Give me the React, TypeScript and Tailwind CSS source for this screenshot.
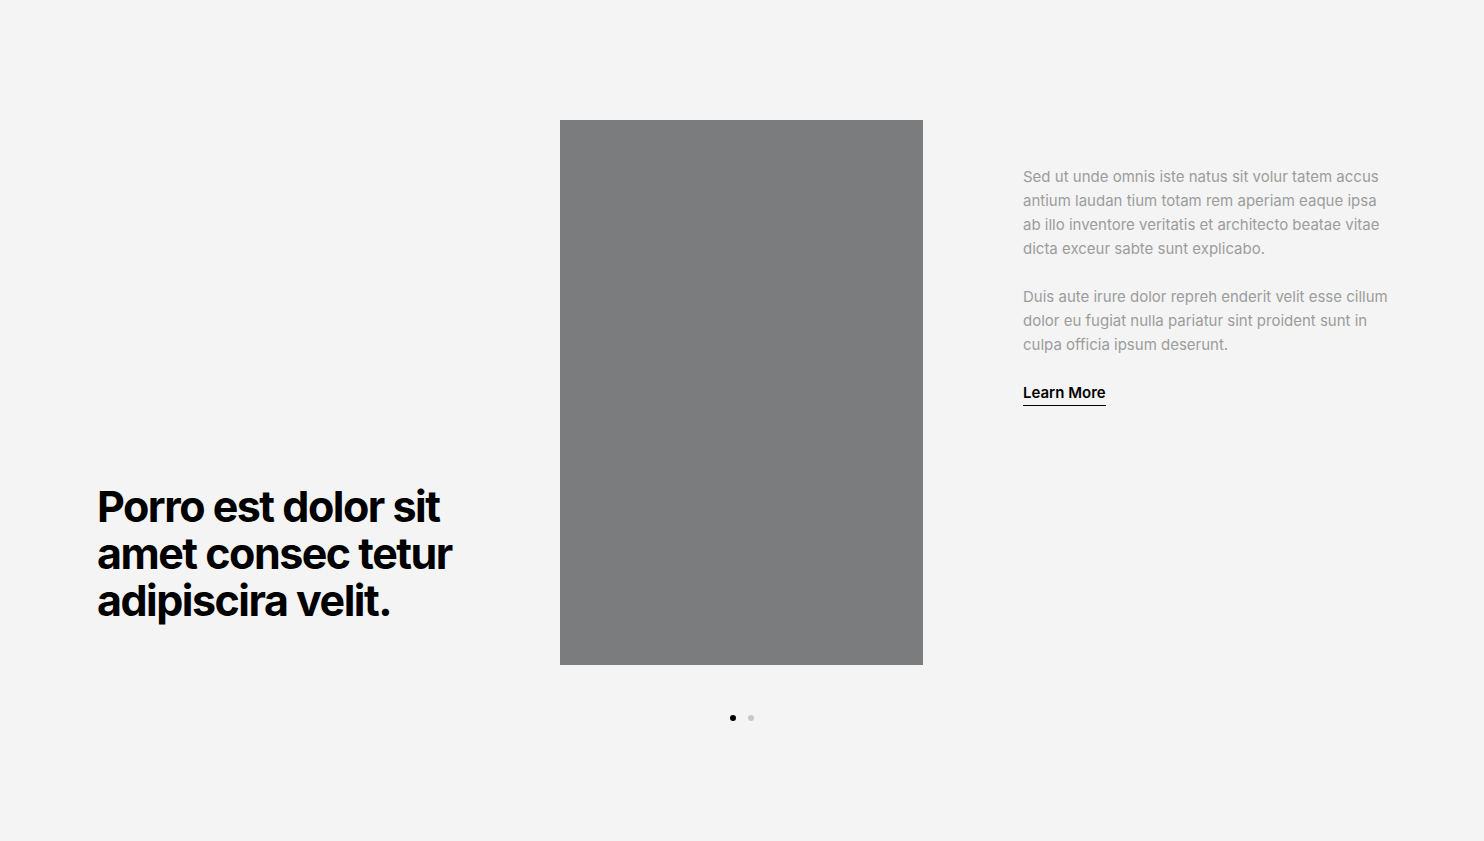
const paragraphs = [
  "Sed ut unde omnis iste natus sit volur tatem accus antium laudan tium totam rem aperiam eaque ipsa ab illo inventore veritatis et architecto beatae vitae dicta exceur sabte sunt explicabo.",
  "Duis aute irure dolor repreh enderit velit esse cillum dolor eu fugiat nulla pariatur sint proident sunt in culpa officia ipsum deserunt.",
];

const App = () => {
  return (
    <div className="min-h-[841px] w-full bg-[#f4f4f4] font-['Inter',sans-serif] pt-[120px]">
      {/* SLIDE */}
      <div className="grid grid-cols-[463px_363px_464px] px-[97px]">
        <div className="flex items-end pb-[41px]">
          <h1 className="text-[43px] leading-[47px] font-bold tracking-[-0.035em] text-black">
            Porro est dolor sit
            <br />
            amet consec tetur
            <br />
            adipiscira velit.
          </h1>
        </div>
        <div className="h-[545px] bg-[#7b7c7d]" />
        <div className="pl-[100px] pt-[45px]">
          <div className="flex flex-col gap-6 w-[372px] text-[15px] leading-6 text-[#9c9c9c]">
            {paragraphs.map((p) => (
              <p key={p.slice(0, 10)}>{p}</p>
            ))}
          </div>
          <a
            href="#"
            className="inline-block mt-6 text-[15px] leading-6 font-semibold text-black border-b border-black"
          >
            Learn More
          </a>
        </div>
      </div>
      {/* DOTS */}
      <div className="flex justify-center items-center gap-3 mt-[50px]">
        <span className="w-[6px] h-[6px] rounded-full bg-black" />
        <span className="w-[6px] h-[6px] rounded-full bg-[#c8c8c8]" />
      </div>
    </div>
  );
};

export default App;
